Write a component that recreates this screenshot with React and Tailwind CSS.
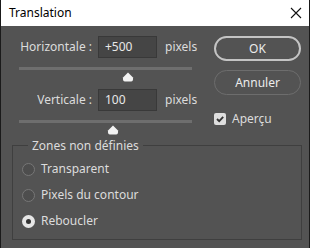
import React from 'react';

const font = { fontFamily: '"Noto Sans", "Liberation Sans", sans-serif' };

const SliderRow = ({ label, value, thumbX }) => (
    <div className="flex flex-col">
        <div className="flex items-center h-[22px]">
            <span className="w-[97px] text-right pr-[6px] text-[12px] text-[#dcdcdc]">{label}</span>
            <div className="w-[59px] h-[22px] bg-[#454545] border border-[#393939] flex items-center pl-[6px] text-[12px] text-[#e8e8e8]">
                {value}
            </div>
            <span className="ml-[8px] text-[12px] text-[#dcdcdc]">pixels</span>
        </div>
        <div className="ml-[18px] mt-[9px] w-[173px] h-[3px] bg-[#6e6e6e]" />
        <div className="relative h-[12px]">
            <svg className="absolute top-[2px]" style={{ left: thumbX }} width="12" height="10" viewBox="0 0 12 10">
                <path d="M6 0.5 L11 5.5 Q11.5 9.5 9 9.5 L3 9.5 Q0.5 9.5 1 5.5 Z" fill="#f2f2f2" />
            </svg>
        </div>
    </div>
);

const Radio = ({ label, checked }) => (
    <div className="flex items-center h-[26px]">
        {checked ? (
            <span className="w-[13px] h-[13px] rounded-full bg-[#e6e6e6] flex items-center justify-center">
                <span className="w-[5px] h-[5px] rounded-full bg-[#333]" />
            </span>
        ) : (
            <span className="w-[13px] h-[13px] rounded-full border border-[#777777] bg-[#4d4d4d]" />
        )}
        <span className="ml-[6px] text-[12px] text-[#dcdcdc]">{label}</span>
    </div>
);

export default function App() {
    return (
        <div className="w-[310px] h-[248px] flex flex-col bg-[#535353] border-x border-[#1a1a1a] overflow-hidden" style={font}>
            <div className="h-[26px] bg-white flex items-center justify-between pl-[8px] pr-[7px] shrink-0">
                <span className="text-[12px] text-black">Translation</span>
                <svg width="12" height="12" viewBox="0 0 12 12">
                    <path d="M1 1 L11 11 M11 1 L1 11" stroke="#111" strokeWidth="1.1" />
                </svg>
            </div>
            <div className="flex pt-[10px]">
                <div className="w-[213px] flex flex-col">
                    <SliderRow label="Horizontale :" value="+500" thumbX={121} />
                    <div className="h-[7px]" />
                    <SliderRow label="Verticale :" value="100" thumbX={106} />
                </div>
                <div className="flex flex-col">
                    <button className="w-[87px] h-[25px] rounded-full border-2 border-[#c4c4c4] text-[12px] text-[#ececec]">OK</button>
                    <button className="mt-[9px] w-[87px] h-[25px] rounded-full border border-[#6d6d6d] text-[12px] text-[#ececec]">Annuler</button>
                    <div className="mt-[15px] flex items-center">
                        <span className="w-[12px] h-[12px] rounded-[2px] bg-[#dedede] flex items-center justify-center">
                            <svg width="10" height="10" viewBox="0 0 10 10">
                                <path d="M2 5 L4.2 7.2 L8.2 2.8" stroke="#333" strokeWidth="1.8" fill="none" />
                            </svg>
                        </span>
                        <span className="ml-[6px] text-[12px] text-[#dcdcdc]">Aperçu</span>
                    </div>
                </div>
            </div>
            <div className="mt-[10px] ml-[11px] mr-[7px] h-[95px] border border-[#3f3f3f] relative pl-[9px] pt-[10px]">
                <span className="absolute -top-[9px] left-[15px] px-[4px] bg-[#535353] text-[12px] text-[#dcdcdc]">Zones non définies</span>
                <Radio label="Transparent" />
                <Radio label="Pixels du contour" />
                <Radio label="Reboucler" checked />
            </div>
        </div>
    );
}
